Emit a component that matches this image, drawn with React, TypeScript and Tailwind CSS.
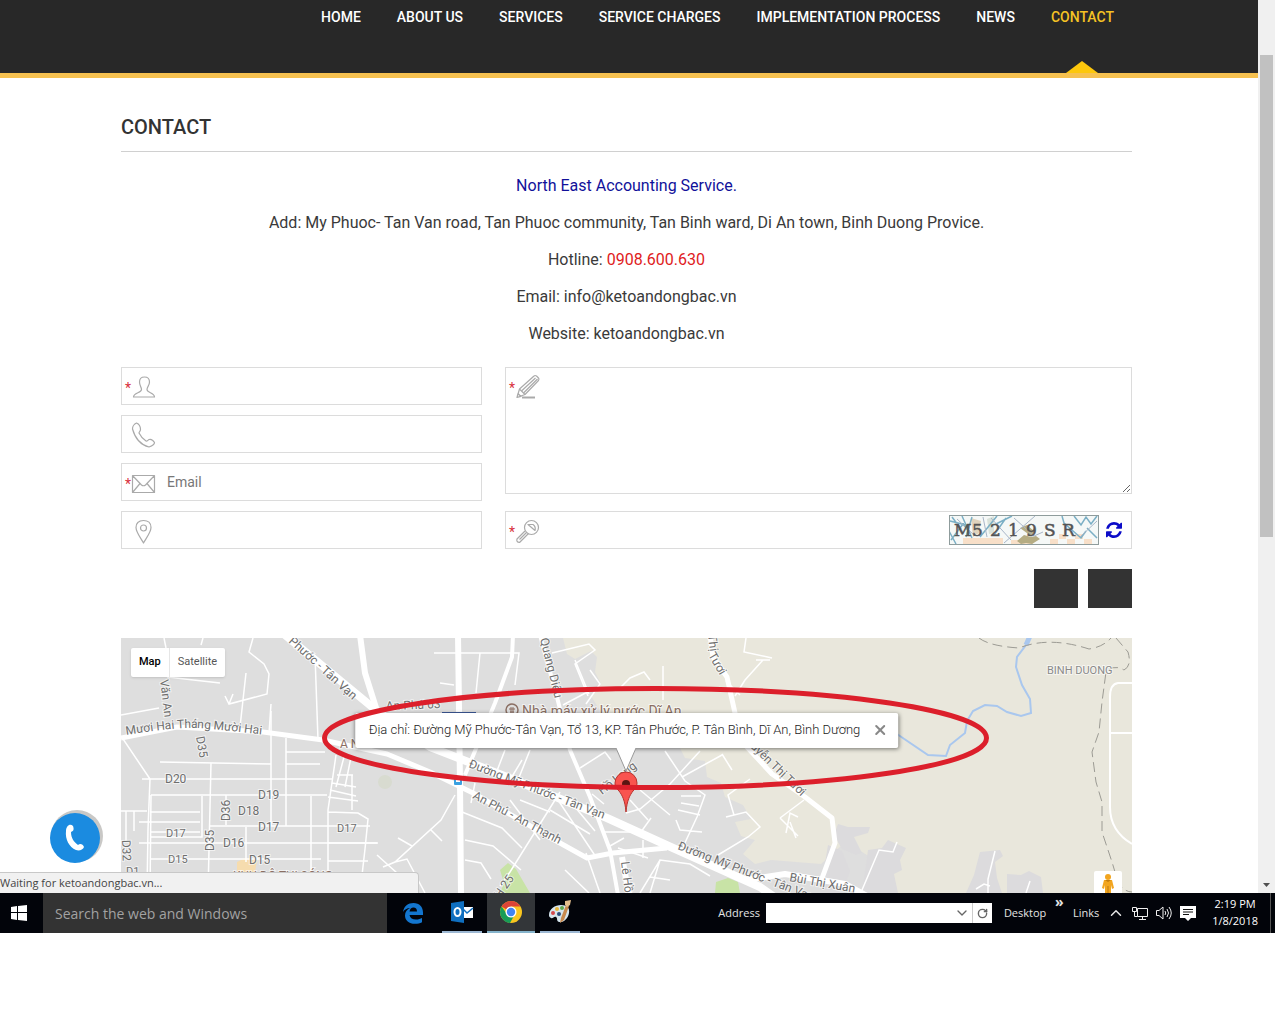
import React from 'react';
import { ChevronDown, ChevronUp, RotateCw, X } from 'lucide-react';

const NAV_ITEMS = [
  'HOME',
  'ABOUT US',
  'SERVICES',
  'SERVICE CHARGES',
  'IMPLEMENTATION PROCESS',
  'NEWS',
  'CONTACT',
];

const ACTIVE_ITEM = 'CONTACT';

const Header: React.FC = () => (
  <header className="h-[78px] border-b-[5px] border-[#f6c150] bg-[#282828] pr-36">
    <nav className="flex h-full justify-end gap-9 text-sm font-medium text-white">
      {NAV_ITEMS.map((item) => (
        <a
          key={item}
          href="#"
          className={
            item === ACTIVE_ITEM
              ? 'relative h-full pt-[7px] whitespace-nowrap text-[#f5c324]'
              : 'pt-[7px] whitespace-nowrap'
          }
        >
          {item}
          {item === ACTIVE_ITEM && (
            <svg
              className="absolute bottom-0 left-1/2 -translate-x-1/2"
              width="32"
              height="12"
              viewBox="0 0 32 12"
            >
              <path d="M0 12 16 0l16 12z" fill="#fdc70c" />
            </svg>
          )}
        </a>
      ))}
    </nav>
  </header>
);

const ContactInfo: React.FC = () => (
  <section>
    <h1 className="border-b border-[#d0d0d0] pt-[34px] pb-[9px] text-xl leading-[30px] font-medium text-[#333]">
      CONTACT
    </h1>
    <div className="mt-[22px] flex flex-col gap-[13px] text-center text-base text-[#3a3a3a]">
      <p className="text-[#11119a]">North East Accounting Service.</p>
      <p>Add: My Phuoc- Tan Van road, Tan Phuoc community, Tan Binh ward, Di An town, Binh Duong Provice.</p>
      <p>
        Hotline: <span className="text-[#e01b22]">0908.600.630</span>
      </p>
      <p>Email: info@ketoandongbac.vn</p>
      <p>Website: ketoandongbac.vn</p>
    </div>
  </section>
);

interface IconProps {
  children: React.ReactNode;
}

const FieldIcon: React.FC<IconProps> = ({ children }) => (
  <svg
    className="shrink-0 overflow-visible"
    width="24"
    height="24"
    viewBox="0 0 24 24"
    fill="none"
    stroke="#aaaaaa"
    strokeWidth="1.200"
    strokeLinejoin="round"
  >
    {children}
  </svg>
);

const PersonIcon = () => (
  <FieldIcon>
    <path d="M7.500 8C7.500 4.500 9 3 12.500 3s5 1.500 5 5c0 3.500-2.500 5-2.500 7.500 0 3.500 7.500 3 7.500 7.500h-21c0-4.500 8-4 8-7.500 0-2.500-2-4-2-7.500z" />
  </FieldIcon>
);

const PhoneIcon = () => (
  <FieldIcon>
    <path d="M4.500 1C2 2 .5 5 .5 7 3 16 9 23 17 25c3-1 5.500-3 5.500-4.500C21 18 18.500 17 17 17.500c-1.500 1-2 2-3 1.500-3-2-5.500-5-7-8 0-1.500 1.500-1.500 1.500-3.500C8.500 5 7 2 4.500 1z" />
  </FieldIcon>
);

const MailIcon = () => (
  <FieldIcon>
    <path d="M.5 5.500h22v17H.5zM.5 5.500l9 9.500q2 1.500 4 0l9-9.500M.5 22.500l7.500-9M22.500 22.500l-7.500-9" />
  </FieldIcon>
);

const PinIcon = () => (
  <FieldIcon>
    <path d="M11.500 25C8 19 4 14 4 9.500 4 5 7 2.500 11.500 2.500S19 5 19 9.500c0 4.500-4 9.500-7.500 15.500z" />
    <circle cx="11.500" cy="10" r="3" />
  </FieldIcon>
);

const PencilIcon = () => (
  <FieldIcon>
    <path d="M1 23.500l2.500-8.500L18 2q1-1 2.500 0L22.500 4q1 1 0 2.500L9 20.500zM3.500 15L9 20.500M6 16.500L19.500 4M8 18.500L21.500 5M1 23.500l1-4 3 3z" />
    <path d="M6 23.500h13" strokeWidth="2" />
  </FieldIcon>
);

const KeyIcon = () => (
  <FieldIcon>
    <circle cx="15.500" cy="9.500" r="7" />
    <path d="M12 6.500h5q3 2 2 6zM9 13l-8 8q-1 3 2.500 3.500L12.500 15.500M10.500 14.500l-7 7" />
  </FieldIcon>
);

interface FieldProps {
  id: string;
  name: string;
  icon: React.ReactNode;
  required?: boolean;
  placeholder?: string;
  children?: React.ReactNode;
}

const FieldLabel: React.FC<{ id: string; icon: React.ReactNode; required?: boolean }> = ({
  id,
  icon,
  required,
}) => (
  <label htmlFor={id} className="flex shrink-0 items-center">
    <span className="w-[7px] pt-1 text-sm leading-5 text-[#d8303c]">{required ? '*' : ''}</span>
    {icon}
  </label>
);

const Field: React.FC<FieldProps> = ({ id, name, icon, required, placeholder, children }) => (
  <div className="flex h-[38px] items-center border border-[#dcdcdc] pl-[3px]">
    <FieldLabel id={id} icon={icon} required={required} />
    <input
      id={id}
      type="text"
      aria-label={name}
      placeholder={placeholder}
      className="h-full min-w-0 flex-1 px-[11px] text-sm text-[#555] outline-none placeholder:text-[#777]"
    />
    {children}
  </div>
);

const Captcha: React.FC = () => (
  <svg className="mr-[7px] shrink-0" width="150" height="30" viewBox="0 0 150 30">
    <rect width="150" height="30" fill="#f5f8f7" />
    <g fill="#f8dfc8">
      <path d="M14 23h40v6H14zM62 25h22v4H62zM101 24h8v5h-8zM118 24h8v5h-8zM135 24h8v5h-8zM110 19h7v5h-7zM126 19h8v5h-8z" />
      <path d="M22 3l10 3-2 12-6 4z" fill="#e0d3bd" />
      <path d="M38 4l7-3v17l-5 1z" fill="#d9e2da" />
      <path d="M68 26l7-6 7 2 5-1 4 3-8 5-6-1-5 1zM71 13l7-3 8 7-4 4z" fill="#b5ac83" />
    </g>
    <g fill="none" stroke="#7bafc5" strokeWidth="1.500">
      <path d="M1 6l20 5M2 25L14 9l7 9M3 2l9 12M0 16l7 13M23 2l-6 20M13 1l10 22M31 22L48 1M45 10l18-9M57 3L45 20M113 1l2 7 17 15 5-7M125 1l7 9 5-8 5 7 6-8M138 13l10 10" />
    </g>
    <g fill="none" stroke="#a9b6c8" strokeWidth="1">
      <path d="M55 28L86 1M34 2l4 20M65 3l20 18 9-4M131 22l17-16M8 4l18 17M42 3l20 22" />
    </g>
    <text
      x="5 23 41 59 77 95 113"
      y="21"
      fill="#545454"
      stroke="#545454"
      strokeWidth="0.500"
      fontFamily="'DejaVu Serif', serif"
      fontSize="17"
    >
      M5219SR
    </text>
    <rect x="0.500" y="0.500" width="149" height="29" fill="none" stroke="#8f9c9c" />
  </svg>
);

const ContactForm: React.FC = () => (
  <form className="mt-[21px]" onSubmit={(e) => e.preventDefault()}>
    <div className="flex gap-[23px]">
      <div className="flex flex-[361] flex-col gap-2.5">
        <Field id="name" name="Name" icon={<PersonIcon />} required />
        <Field id="phone" name="Phone" icon={<PhoneIcon />} />
        <Field id="email" name="Email" icon={<MailIcon />} required placeholder="Email" />
        <Field id="address" name="Address" icon={<PinIcon />} />
      </div>
      <div className="flex flex-[627] flex-col justify-between">
        <div className="flex h-[127px] items-start border border-[#dcdcdc] pl-[3px]">
          <div className="pt-1.5">
            <FieldLabel id="message" icon={<PencilIcon />} required />
          </div>
          <textarea
            id="message"
            aria-label="Message"
            className="h-full flex-1 resize px-[11px] py-2 text-sm outline-none"
          />
        </div>
        <Field id="captcha" name="Security code" icon={<KeyIcon />} required>
          <Captcha />
          <button type="button" aria-label="Reload" className="mr-[9px]">
            <svg width="16" height="16" viewBox="0 0 1536 1536" fill="#0c0cc8">
              <path d="M1511 928q0 5-1 7-64 268-268 434.500t-478 166.500q-146 0-282.500-55t-243.500-157l-129 129q-19 19-45 19t-45-19-19-45v-448q0-26 19-45t45-19h448q26 0 45 19t19 45-19 45l-137 137q71 66 161 102t187 36q134 0 250-65t186-179q11-17 53-117 8-23 30-23h192q13 0 22.500 9.500t9.500 22.500zm25-800v448q0 26-19 45t-45 19h-448q-26 0-45-19t-19-45 19-45l138-138q-148-137-349-137-134 0-250 65t-186 179q-11 17-53 117-8 23-30 23h-199q-13 0-22.500-9.500t-9.500-22.500v-7q65-268 270-434.500t480-166.500q146 0 284 55.500t245 156.500l130-129q19-19 45-19t45 19 19 45z" />
            </svg>
          </button>
        </Field>
      </div>
    </div>
    <div className="mt-5 flex justify-end gap-2.5">
      <button type="submit" aria-label="Send" className="h-[39px] w-11 bg-[#333]" />
      <button type="reset" aria-label="Reset" className="h-[39px] w-11 bg-[#333]" />
    </div>
  </form>
);

const MAP_VIEW = '121 638 1011 255';

// x, y, rotation, text, size
const MAP_LABELS: [number, number, number, string, number][] = [
  [160, 680, 83, 'Văn An', 12],
  [196, 737, 80, 'D35', 12],
  [165, 783, 0, 'D20', 12],
  [258, 799, 0, 'D19', 12],
  [238, 815, 0, 'D18', 12],
  [258, 831, 0, 'D17', 12],
  [166, 837, 0, 'D17', 11],
  [337, 832, 0, 'D17', 11],
  [223, 847, 0, 'D16', 12],
  [168, 863, 0, 'D15', 11],
  [249, 864, 0, 'D15', 12],
  [126, 875, 0, 'D1', 11],
  [230, 821, -90, 'D36', 12],
  [214, 851, -90, 'D35', 12],
  [122, 840, 88, 'D32', 12],
  [386, 710, -2, 'An Phú 03', 12],
  [540, 639, 76, 'Quang Diệu', 12],
  [708, 635, 83, 'Thị', 12],
  [708, 655, 60, 'Tươi', 12],
  [750, 747, 44, 'uyễn Thị Tươi', 12],
  [468, 767, 21, 'Đường Mỹ Phước - Tân Vạn', 12],
  [472, 798, 28, 'An Phú - An Thạnh', 12],
  [677, 849, 21, 'Đường Mỹ Phước - Tân Vạn', 12],
  [789, 881, 10, 'Bùi Thị Xuân', 12],
  [621, 862, 83, 'Lê Hồng', 12],
  [602, 795, -38, 'Hồ Lang', 12],
  [500, 899, -55, 'H 25', 12],
  [288, 642, 42, 'Phước - Tân Vạn', 12],
];

const MapDrawing: React.FC = () => (
  <svg
    className="block h-[255px] w-full"
    viewBox={MAP_VIEW}
    preserveAspectRatio="xMidYMid slice"
    fontFamily="Roboto, sans-serif"
  >
    <rect x="121" y="638" width="1011" height="255" fill="#dedede" />
    <path
      d="M563 638l4 16 8 5 16-8 6 6-2 15 6 12-10 12 10 16-12 10 20 6 70 18 6 12 20 3 2 16 14 6 4 14 18 8 8 14-16 3 6 14 14 4-12 14 12 10 16-4 50 4 20-18 18 4 22 14 6 8-8 36h300V638z"
      fill="#e9e7dc"
    />
    <g fill="#dcdbdd">
      <path d="M838 824l10 3 22 0-2 6-14 4 8 16-6 2-14-6-8-14z" />
      <path d="M828 845l14 6 8 20-8 22h-22z" />
      <path d="M868 850l14-2 6-8 18 8-6 12 2 10-8 4 4 19h-36z" />
      <path d="M980 852l20-2 3 6-8 6 2 16 5 15h-36l8-18z" />
      <path d="M1007 874l14 1 8-4 12 6 2 16h-36z" />
    </g>
    <g fill="#c8e3a6">
      <path d="M500 870l8-7 8 6 14 24h-30l4-10z" />
      <path d="M716 882l12-4 10 4 2 11h-25z" />
      <circle cx="385" cy="782" r="7" fill="#d8dbd0" />
    </g>
    <path d="M237 862l8-4 12 2-2 12h-18z" fill="#f6dcae" />
    {/* side streets */}
    <g fill="none" stroke="#ffffff" strokeWidth="1.500">
      <path d="M121 715l38-7M164 638l2 10M201 645l2-7M167 677l53 6M121 736l29 43M160 762l111 2M160 762M211 763l-3 130M142 779h185M150 779l-2 50-1 64M151 795h176M151 795l-1 98M202 796v41h-52M150 812h50M139 822h61M150 832h50M139 843h238M151 859h170M121 811h26M126 811v30M134 811v20M226 795v30M210 826h160M246 827v35M271 711v115M286 738v88M286 752h39M286 764h34M286 779h46M311 796v97" />
      <path d="M253 638l-4 14 15 12 5 10-2 20-38 10-4-8M229 704l4-10M246 673l-6 54M271 704l-2 30M315 655l3 85M336 755l-8 55v83M344 757l-8 30M351 757l-6 30M337 775h16M332 783l24 4M330 790l26 6M328 797l30 4M352 775v35M328 812l30 1 10 6-3 30-5 44M328 843h50M328 861h40" />
      <path d="M455 795l-14 25-46 42-12 5M395 862l12-3 18 34M377 855l20 18M412 846l-14-8M430 829l12 12M434 653h85l-4 32M480 653l-4 40M440 683l14 2M475 783l-4 20M462 812l40 16 20 20M465 840l28 6 28 24M465 860l16 3 10 16M522 760l-12 20M505 750l-10 26M530 750l-14 35" />
      <path d="M552 653l37-9 6 6-20 14 13 32M590 670l10 14-14 20M620 640M620 688l10-10 14-6 6 8M663 666v34M575 660l14 34M563 705l30-16M580 768l25-16 6 8M592 794l12 10M575 807l20 24M550 810l40 24M626 813l14-4 30-25 30-33M665 751l20 30 20 14-8 22-14 30M681 796h20M681 803l18 3M678 810l22 5M676 820l4 10 22 2M640 790l30 25M630 800l18 20M605 832h36l10-14M643 840v18M610 846l14-8M560 792l-50 80-10 14M556 797l40 60M540 840l-30 -40M640 893l20-33 30 4 20 12M650 877l20 3M660 860l-10 33M746 638l-2 14 28 6M763 660l-18 20-10 16M770 660h-14M740 695l-14-14M722 755l-40 22M732 770l-10-16" />
      <path d="M718 855l30-18 12-10-14-15-20 5M734 815l-6-20 22-16M780 818l24-18M780 818l18 18M786 833l4-20 8 4M790 822l6 16M862 890l17-40 14 2 4-10M988 893v-14l7-28M976 889l8-5 6 2M1026 893l4-12M600 893l-14-40M565 870l24 23M520 800l30 12M648 858l-30 -10" />
    </g>
    {/* main roads */}
    <g fill="none" stroke="#ffffff" strokeLinejoin="round">
      <path
        d="M121 738l56-11 86 5 60 8 64 14 43 18 43 21 87 50 27 15 26-5 54-5"
        strokeWidth="5"
      />
      <path d="M285 635l92 76 53 36 77 30 100 41 66 30 87 39 20 14" strokeWidth="8" />
      <path d="M360 635l5 38 12 38M458 635l2 148 1 112" strokeWidth="6" />
      <path d="M513 635l-1 22-17 46-30 72M540 635l17 62 13 53 20 47 20 53 8 45" strokeWidth="4" />
      <path d="M710 635l3 22 14 20 8 36 12 34 25 27 33 23 27 21 3 25-14 38" strokeWidth="5" />
      <path d="M622 857l7 38M745 880l40-6 60 10 22 12" strokeWidth="6" />
      <path d="M1132 683h-14q-8 1-8 14v110q0 24 22 37M1110 733h22" strokeWidth="2" />
    </g>
    <g fill="none" stroke="#a9c7ee" strokeWidth="2">
      <path d="M1030 635l-4 10-9 12-1 10 6 18 8 14 1 14-10 3-14-4-10-6-12-1-12 6-6 10-2 12-15 12-4 11-18-1-34-23" />
      <path d="M1030 636l-4 9" strokeWidth="5" />
    </g>
    <path
      d="M979 638q10 8 40 10 30-12 70 1 14-2 22-11M1116 638l12 14q4 14-4 18-10-6-18 2l-4 30-3 30-7 20 4 30 6 20v30l10 30 6 20q6 10 14 10"
      fill="none"
      stroke="#9c9b94"
      strokeDasharray="10 5"
    />
    <rect x="454" y="776" width="8" height="9" rx="1" fill="#3aa0e0" />
    <path d="M456 779h4v3h-4z" fill="#fff" />
    <path d="M442 712h34v2h-34z" fill="#3d5a9a" />
    <g fill="#6e6e6e" stroke="#ffffff" strokeOpacity="0.600" strokeWidth="2" paintOrder="stroke">
      {MAP_LABELS.map(([x, y, angle, text, size], i) => (
        <text key={i} x={x} y={y} fontSize={size} transform={`rotate(${angle} ${x} ${y})`}>
          {text}
        </text>
      ))}
      <text fontSize="12">
        <textPath href="#muoi-hai">Mươi Hai Tháng Mười Hai</textPath>
      </text>
      <text x="1047" y="674" fontSize="11" fill="#8a8a8a">
        BINH DUONG
      </text>
      <text x="522" y="716" fontSize="14" fill="#8b6f63">
        Nhà máy xử lý nước Dĩ An
      </text>
      <text x="340" y="748" fontSize="12" fill="#8b6f63">
        A N
      </text>
      <text x="233" y="880" fontSize="12" fill="#8b6f63">
        KHU ĐÔ THỊ SÓNG
      </text>
    </g>
    <path id="muoi-hai" d="M126 735q50-8 70-7t70 7" fill="none" />
    <circle cx="512" cy="710" r="6" fill="none" stroke="#8b6f63" strokeWidth="1.500" />
    <path d="M509 709h6M510 712h4M511 707v6M513 707v6" stroke="#8b6f63" />
  </svg>
);

const MapOverlay: React.FC = () => (
  <svg
    className="pointer-events-none absolute inset-0 h-full w-full"
    viewBox={MAP_VIEW}
    preserveAspectRatio="xMidYMid slice"
  >
    <path d="M616 748l10 23 10-23" fill="#fff" stroke="#999" strokeWidth="1" />
    <path d="M617 746h18v3h-18z" fill="#fff" />
    <path
      d="M626 812c-1-12-4-17-7-21-3-3-4-5-4-8a11 11 0 0 1 22 0c0 3-1 5-4 8-3 4-6 9-7 21z"
      fill="#f9544f"
      stroke="#b8322d"
    />
    <circle cx="626" cy="784" r="4" fill="#5a1512" />
    <ellipse cx="655.500" cy="738" rx="331" ry="49.500" fill="none" stroke="#dc1f2b" strokeWidth="5" />
  </svg>
);

const LocationMap: React.FC = () => (
  <section className="relative mt-[30px] overflow-hidden">
    <MapDrawing />
    <div className="absolute top-2.5 left-2.5 flex h-[29px] rounded-xs bg-white text-[11px] shadow-sm">
      <button className="border-r border-[#e6e6e6] px-2 font-medium text-black">Map</button>
      <button className="px-2 text-[#565656]">Satellite</button>
    </div>
    <div className="absolute top-[75px] left-1/2 flex h-[35px] -translate-x-1/2 items-center gap-3 rounded-xs bg-white pr-2.5 pb-[2px] pl-3.5 text-[13px] font-light whitespace-nowrap text-[#222] shadow-[0_1px_4px_rgba(0,0,0,0.5)]">
      <p>Địa chỉ: Đường Mỹ Phước-Tân Vạn, Tổ 13, KP. Tân Phước, P. Tân Bình, Dĩ An, Bình Dương</p>
      <button aria-label="Close">
        <X size={16} strokeWidth={3} className="text-[#888]" />
      </button>
    </div>
    <button
      aria-label="Street view"
      className="absolute right-2.5 bottom-0 flex h-[22px] w-7 justify-center rounded-t-xs bg-white pt-[3px]"
    >
      <svg width="12" height="19" viewBox="0 0 12 19">
        <circle cx="6" cy="3" r="3" fill="#f2a51f" />
        <path d="M2 6h8l2 8-2 1-1-4v8H3v-8l-1 4-2-1z" fill="#f2a51f" />
        <path d="M3 6h6l-3 2zM5.500 12h1v7h-1z" fill="#c07c10" />
      </svg>
    </button>
    <MapOverlay />
  </section>
);

const CallButton: React.FC = () => (
  <a href="#" aria-label="Call" className="absolute bottom-[29px] left-[50px]">
    <svg width="54" height="54" viewBox="0 0 54 54">
      <circle cx="27" cy="26" r="26" fill="#c9c8c6" />
      <circle cx="25" cy="28" r="25" fill="#1b8be0" />
      <path
        d="M16 21c0-5 4-8 7-5 1 3 1 5-2 6 0 6 3 10 7 13 2-2 5-1 6 2-1 3-5 4-8 3-7-3-11-11-10-19z"
        fill="#fff"
      />
    </svg>
  </a>
);

const Scrollbar: React.FC = () => (
  <div className="flex w-[17px] shrink-0 flex-col items-center justify-between bg-[#f0f0f0] pt-[55px] pb-[6px]">
    <div className="h-[482px] w-[13px] bg-[#c1c1c1]" />
    <svg width="7" height="4" viewBox="0 0 7 4">
      <path d="M0 0h7L3.500 4z" fill="#505050" />
    </svg>
  </div>
);

const EdgeIcon = () => (
  <svg width="22" height="22" viewBox="0 0 22 22" fill="#1376cf">
    <path d="M1 10C2 4 6 1 11.500 1 17.500 1 21 5 21 10.500V13H7.500c.5 3 3 4.500 6.500 4.500 2.500 0 4.500-.7 6-1.500v4.300c-2 1-4.300 1.500-7 1.500C7 21.800 3 18.500 3 13.500 3 10 5 7.500 8 6 5 6.200 2.500 7.500 1 10zM7.500 9.500H15C15 7 13.700 5.500 11.500 5.500S8 7 7.500 9.500z" />
  </svg>
);

const OutlookIcon = () => (
  <svg width="24" height="24" viewBox="0 0 24 24">
    <path d="M11 7h12v11H11z" fill="#fff" />
    <path d="M13 9l4 4 6-5" fill="none" stroke="#0f6fc0" strokeWidth="1.500" />
    <path d="M1 3l13-2v22L1 21z" fill="#0f6fc0" />
    <ellipse cx="7.500" cy="12" rx="3" ry="4" fill="none" stroke="#fff" strokeWidth="2" />
  </svg>
);

const ChromeIcon = () => (
  <svg width="24" height="24" viewBox="0 0 24 24">
    <circle cx="12" cy="12" r="11" fill="#f9c61f" />
    <path d="M12 12L2.500 6.500A11 11 0 0 1 21.500 6.500H12z" fill="#dc4437" />
    <path d="M2.500 6.500A11 11 0 0 0 11 23l5-9-4-2-4 2z" fill="#179c58" />
    <circle cx="12" cy="12" r="5.500" fill="#fff" />
    <circle cx="12" cy="12" r="4.200" fill="#4284f3" />
  </svg>
);

const PaintIcon = () => (
  <svg width="24" height="24" viewBox="0 0 24 24">
    <path d="M1 15C1 9 7 5 13 5c6 0 9 3 8 8-1 6-6 10-10 9-3-1-1-4-3-5s-3 2-5 1-2-2-2-3z" fill="#d6e6ee" />
    <circle cx="5" cy="13" r="2" fill="#d2494b" />
    <circle cx="9" cy="9" r="2" fill="#e8b63a" />
    <circle cx="14" cy="8" r="2" fill="#5fa850" />
    <circle cx="11" cy="14" r="2" fill="#2b4f7e" />
    <path d="M18 5l3 1-5 14-4 3 1-5z" fill="#c98a4e" />
    <path d="M17 1l6-1-1 5-3 2-2-2z" fill="#e2bd8c" />
  </svg>
);

const TASKS = [
  { name: 'Edge', icon: <EdgeIcon />, style: 'w-11 pr-1' },
  { name: 'Outlook', icon: <OutlookIcon />, style: 'w-10 border-b-2 border-[#9db8d3]' },
  { name: 'Chrome', icon: <ChromeIcon />, style: 'w-12 border-b-2 border-[#86b4cc] bg-[#333639]' },
  { name: 'Paint', icon: <PaintIcon />, style: 'w-10 border-b-2 border-[#9db8d3]' },
];

const Taskbar: React.FC = () => (
  <footer className="flex h-10 items-center bg-[#02040a] font-['Open_Sans',sans-serif] text-[11px] text-[#e4e4e4]">
    <button aria-label="Start" className="flex h-full w-[43px] items-center pl-[11px]">
      <svg width="16" height="16" viewBox="0 0 16 16" fill="#fff">
        <path d="M0 2l6-1v6H0zM7 1l9-1v7H7zM0 8h6v7l-6-1zM7 8h9v8l-9-1z" />
      </svg>
    </button>
    <input
      type="text"
      aria-label="Search"
      placeholder="Search the web and Windows"
      className="h-full w-[344px] bg-[#333] px-3 text-sm outline-none placeholder:text-[#a2a2a2]"
    />
    <div className="ml-[6px] flex h-full gap-[5px]">
      {TASKS.map((task) => (
        <button
          key={task.name}
          aria-label={task.name}
          className={`flex h-full items-center justify-center ${task.style}`}
        >
          {task.icon}
        </button>
      ))}
    </div>
    <div className="ml-auto flex h-full items-center">
      <label htmlFor="address-bar" className="mr-[6px]">
        Address
      </label>
      <div className="mr-3 flex h-5 items-center bg-white text-[#666]">
        <input id="address-bar" type="text" className="h-full w-[188px] px-1 outline-none" />
        <ChevronDown size={16} />
        <span className="ml-[2px] flex h-full items-center border-l border-[#ccc] px-1">
          <RotateCw size={11} strokeWidth={3} />
        </span>
      </div>
      <span className="w-[51px]">Desktop</span>
      <span className="w-[18px] self-start pt-[1px] text-sm leading-4 font-bold">»</span>
      <span className="mr-2">Links</span>
      <ChevronUp size={18} className="mr-[7px]" />
      <svg className="mr-2" width="16" height="16" viewBox="0 0 16 16" fill="none" stroke="#eee">
        <path d="M5.500 3.500h10v8h-10zM10.500 11.500v3M7 14.500h7M.5 2.500h4v4h-4zM2.500 6.500v5h3" />
      </svg>
      <svg className="mr-2" width="16" height="16" viewBox="0 0 16 16" fill="none" stroke="#eee">
        <path d="M.5 5.500H3l4-3.500v12l-4-3.500H.5zM9 6q1.500 2 0 4M11 4q3 4 0 8M13 2q4.500 6 0 12" />
      </svg>
      <svg className="mr-4" width="16" height="16" viewBox="0 0 16 16">
        <path d="M0 1h16v12h-5l-3 3-3-3H0z" fill="#fff" />
        <path d="M3 4.500h10M3 7h10M3 9.500h6" stroke="#111" />
      </svg>
      <div className="mr-3 pb-[3px] text-center leading-[17px] whitespace-nowrap text-white">
        <p>2:19 PM</p>
        <p>1/8/2018</p>
      </div>
      <div className="mr-1 h-full w-px bg-[#555]" />
    </div>
  </footer>
);

export default function App() {
  return (
    <div className="bg-white pr-[5px] font-[Roboto,sans-serif]">
      <div className="relative flex">
        <div className="min-w-0 flex-1">
          <Header />
          <main className="pr-[126px] pl-[121px]">
            <ContactInfo />
            <ContactForm />
            <LocationMap />
          </main>
        </div>
        <Scrollbar />
        <CallButton />
        <div className="absolute bottom-0 left-0 h-[21px] w-[419px] overflow-hidden rounded-tr-sm border-t border-r border-[#c8c8c8] bg-[#f1f1f1] font-['Open_Sans',sans-serif] text-[11px] leading-5 text-[#444]">
          Waiting for ketoandongbac.vn...
        </div>
      </div>
      <Taskbar />
    </div>
  );
}
